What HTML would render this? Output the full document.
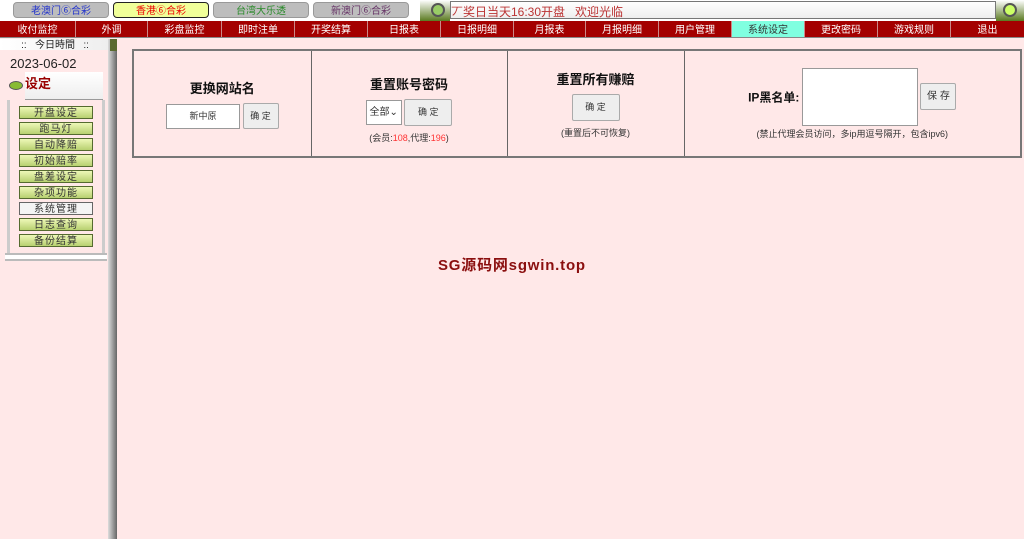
<!DOCTYPE html>
<html><head><meta charset="utf-8"><style>
*{margin:0;padding:0;box-sizing:border-box}
body{width:1024px;height:539px;overflow:hidden;background:#ffe8e8;font-family:"Liberation Sans","Noto Sans CJK SC",sans-serif;position:relative;font-size:11px}
.abs{position:absolute}
.top{left:0;top:0;width:1024px;height:21px;background:#fff}
.tab{position:absolute;top:2px;height:16px;width:96px;border:1px solid #999;border-radius:4px;background:#bdbdbd;text-align:center;font-size:10px;line-height:10px;padding-top:4px;overflow:hidden}
.nav{left:0;top:21px;width:1024px;height:17px;background:#a40000;border-bottom:1px solid #888}
.nav div{position:absolute;top:0;height:16px;color:#fff;font-size:10px;text-align:center;line-height:10px;padding-top:5px;border-right:1px solid #c88;overflow:hidden}
.mb{position:absolute;left:19px;width:74px;height:13px;border:1px solid #556b2f;background:linear-gradient(#eef8b8,#b8d070);font-size:10px;text-align:center;line-height:10px;padding-top:2px;color:#333;letter-spacing:1px;overflow:hidden}
table{position:absolute;left:132px;top:49px;width:890px;height:109px;border-collapse:collapse;border:2px solid #777}
td{border:1px solid #666;text-align:center;vertical-align:middle;font-size:9px;color:#333}
h3{font-size:13px;color:#111;margin-bottom:6px}
.btn{display:inline-block;border:1px solid #aaa;background:#eee;border-radius:2px;font-size:9px;vertical-align:middle;text-align:center}
.r{color:#f33}
</style></head><body>
<div class="abs top">
<div class="tab" style="left:13px;color:#2233cc">老澳门⑥合彩</div>
<div class="tab" style="left:113px;background:#f0ff99;border:1px solid #222;color:#e00">香港⑥合彩</div>
<div class="tab" style="left:213px;color:#2a8a2a">台湾大乐透</div>
<div class="tab" style="left:313px;color:#663366">新澳门⑥合彩</div>
<div class="abs" style="left:420px;top:0;width:30px;height:21px;background:linear-gradient(#fff,#5a7a20)"></div>
<div class="abs" style="left:431px;top:3px;width:14px;height:14px;border-radius:50%;border:2px solid #555;background:#9c6"></div>
<div class="abs" style="left:450px;top:1px;width:546px;height:18px;border:1px solid #777;background:linear-gradient(#fff,#eee);color:#b33;font-size:12px;line-height:12px;padding-top:4px;overflow:hidden">丆奖日当天16:30开盘&nbsp;&nbsp;&nbsp;欢迎光临</div>
<div class="abs" style="left:996px;top:0;width:28px;height:21px;background:linear-gradient(#fff,#5a7a20)"></div>
<div class="abs" style="left:1003px;top:3px;width:14px;height:14px;border-radius:50%;border:2px solid #555;background:#cf6"></div>
</div>
<div class="abs nav">
<div style="left:0;width:76px">收付监控</div><div style="left:76px;width:72px">外调</div><div style="left:148px;width:74px">彩盘监控</div><div style="left:222px;width:73px">即时注单</div><div style="left:295px;width:73px">开奖结算</div><div style="left:368px;width:73px">日报表</div><div style="left:441px;width:73px">日报明细</div><div style="left:514px;width:72px">月报表</div><div style="left:586px;width:73px">月报明细</div><div style="left:659px;width:73px">用户管理</div><div style="left:732px;width:73px;background:#80ffe0;color:#333">系统设定</div><div style="left:805px;width:73px">更改密码</div><div style="left:878px;width:73px">游戏规则</div><div style="left:951px;width:73px;border:0">退出</div>
</div>
<div class="abs" style="left:0;top:39px;width:110px;height:11px;background:linear-gradient(90deg,#fff,#eee);font-size:10px;text-align:center;line-height:10px;padding-top:2px;color:#222;overflow:hidden">::&nbsp;&nbsp;&nbsp;今日時間&nbsp;&nbsp;&nbsp;::</div>
<div class="abs" style="left:108px;top:39px;width:9px;height:500px;background:linear-gradient(90deg,#ddd,#666)"></div>
<div class="abs" style="left:110px;top:39px;width:7px;height:12px;background:#5a6a30"></div>
<div class="abs" style="left:10px;top:56px;font-size:13px;color:#222">2023-06-02</div>
<div class="abs" style="left:25px;top:72px;width:78px;height:28px;background:linear-gradient(#fff,#eee);border-bottom:1px solid #999"></div>
<div class="abs" style="left:25px;top:73px;font-size:13px;color:#900;font-weight:bold">设定</div>
<div class="abs" style="left:9px;top:81px;width:14px;height:9px;border-radius:50%;background:#8b3;border:1px solid #555"></div>
<div class="abs" style="left:7px;top:100px;width:98px;height:154px;border-left:3px solid #ccc;border-right:3px solid #ccc"></div>
<div class="mb" style="top:106px">开盘设定</div><div class="mb" style="top:122px">跑马灯</div><div class="mb" style="top:138px">自动降赔</div><div class="mb" style="top:154px">初始赔率</div><div class="mb" style="top:170px">盘差设定</div><div class="mb" style="top:186px">杂项功能</div><div class="mb" style="top:202px;background:#f4f4f4;border-color:#666">系统管理</div><div class="mb" style="top:218px">日志查询</div><div class="mb" style="top:234px">备份结算</div>
<div class="abs" style="left:5px;top:253px;width:102px;height:8px;border-top:2px solid #bbb;border-bottom:2px solid #bbb;background:#fff"></div>
<table><tr>
<td style="width:178px"><h3 style="margin-top:0">更换网站名</h3><span style="display:inline-block;width:74px;height:25px;border:1px solid #999;background:#fff;line-height:23px;vertical-align:middle">新中原</span> <span class="btn" style="width:36px;height:26px;line-height:24px">确 定</span></td>
<td style="width:196px"><h3 style="margin-top:10px">重置账号密码</h3><span style="display:inline-block;width:36px;height:25px;border:1px solid #999;background:#fff;line-height:23px;vertical-align:middle;font-size:10px">全部⌄</span> <span class="btn" style="width:48px;height:27px;line-height:25px">确 定</span><div style="margin-top:5px">(会员:<span class="r">108</span>,代理:<span class="r">196</span>)</div></td>
<td style="width:177px"><h3>重置所有赚赔</h3><span class="btn" style="width:48px;height:27px;line-height:25px">确 定</span><div style="margin-top:5px">(重置后不可恢复)</div></td>
<td><div style="margin-top:0"><b style="font-size:12px;color:#111;vertical-align:middle">IP黑名单:</b> <span style="display:inline-block;width:116px;height:58px;border:1px solid #999;background:#fff;vertical-align:middle"></span> <span class="btn" style="width:36px;height:27px;line-height:25px;font-size:10px">保 存</span></div><div style="margin-top:1px">(禁止代理会员访问，多ip用逗号隔开，包含ipv6)</div></td>
</tr></table>
<div class="abs" style="left:438px;top:254px;font-size:15px;font-weight:bold;color:#8b0f0f;letter-spacing:0.8px">SG源码网sgwin.top</div>
</body></html>
